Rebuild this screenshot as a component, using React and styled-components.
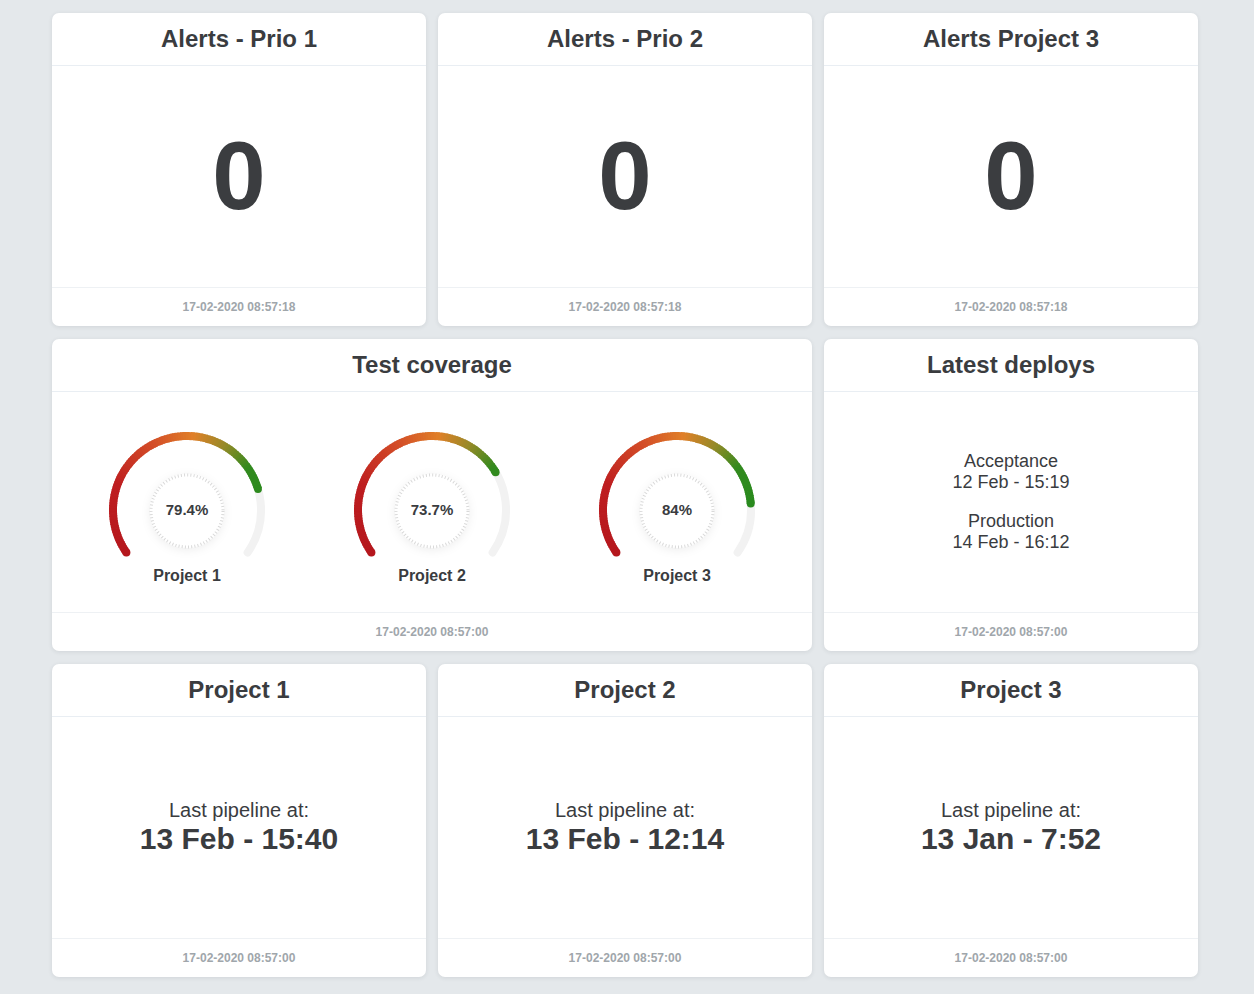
import styled, { createGlobalStyle } from 'styled-components';

const GlobalStyle = createGlobalStyle`
	body {
		margin: 0;
		background: #e4e8eb;
		font-family: 'Liberation Sans', Arial, Helvetica, sans-serif;
		color: #3a3c3f;
	}
`;

const Board = styled.div`
	display: grid;
	grid-template-columns: repeat(3, 374px);
	grid-auto-rows: 312.5px;
	gap: 13px 12px;
	padding: 13px 0 18px 52px;
`;

const Card = styled.section`
	grid-column: span ${({ span }) => span || 1};
	display: flex;
	flex-direction: column;
	background: #fff;
	border-radius: 7px;
	box-shadow: 0 1px 4px rgba(40, 50, 60, 0.1);
	overflow: hidden;
`;

const CardHeader = styled.header`
	height: 52px;
	flex: none;
	display: flex;
	align-items: center;
	justify-content: center;
	border-bottom: 1px solid #e9eef3;
`;

const CardTitle = styled.h2`
	margin: 0;
	font-size: 24px;
	font-weight: 700;
	color: #3a3c3f;
`;

const CardBody = styled.div`
	flex: 1;
	display: flex;
	flex-direction: column;
	align-items: center;
	justify-content: center;
	text-align: center;
`;

const CardFooter = styled.footer`
	height: 38px;
	flex: none;
	display: flex;
	align-items: center;
	justify-content: center;
	border-top: 1px solid #eef1f4;
	font-size: 12px;
	font-weight: 700;
	color: #a0a6ab;
`;

const BigCount = styled.div`
	font-size: 96px;
	font-weight: 700;
	line-height: 1;
	color: #3b3d40;
`;

const GaugeRow = styled.div`
	display: flex;
	justify-content: center;
	gap: 81px;
	padding-top: 10px;
`;

const GaugeWrap = styled.div`
	display: flex;
	flex-direction: column;
	align-items: center;
	width: 164px;
`;

const Dial = styled.div`
	position: relative;
	width: 164px;
	height: 130px;
`;

const Percent = styled.span`
	position: absolute;
	left: 0;
	right: 0;
	top: 73px;
	text-align: center;
	font-size: 15px;
	font-weight: 700;
	line-height: 18px;
	color: #3a3c3f;
`;

const GaugeLabel = styled.div`
	margin-top: 9px;
	font-size: 16px;
	font-weight: 700;
	line-height: 18px;
	color: #3a3c3f;
`;

const DeployGroup = styled.div`
	font-size: 18px;
	line-height: 21px;
	color: #3a3c3f;
	& + & {
		margin-top: 18px;
	}
`;

const PipelineLabel = styled.div`
	font-size: 20px;
	line-height: 23px;
	color: #3a3c3f;
`;

const PipelineTime = styled.div`
	font-size: 30px;
	font-weight: 700;
	line-height: 34px;
	color: #3a3c3f;
`;

const SPAN = 250;
const START = -125;
const STOPS = [
	[0, [181, 23, 29]],
	[0.22, [190, 30, 32]],
	[0.4, [212, 80, 40]],
	[0.52, [224, 128, 40]],
	[0.62, [150, 138, 40]],
	[0.72, [50, 138, 30]],
	[1, [30, 138, 30]],
];

const colorAt = t => {
	for (let i = 1; i < STOPS.length; i++) {
		const [t1, c1] = STOPS[i];
		const [t0, c0] = STOPS[i - 1];
		if (t <= t1) {
			const k = (t - t0) / (t1 - t0);
			const c = c0.map((v, j) => Math.round(v + (c1[j] - v) * k));
			return `rgb(${c.join(',')})`;
		}
	}
	return 'rgb(30,138,30)';
};

const CX = 82;
const CY = 82;
const R = 74;

const pt = deg => {
	const a = (deg * Math.PI) / 180;
	return [CX + R * Math.sin(a), CY - R * Math.cos(a)];
};

const arc = (a0, a1) => {
	const [x0, y0] = pt(a0);
	const [x1, y1] = pt(a1);
	const large = a1 - a0 > 180 ? 1 : 0;
	return `M ${x0} ${y0} A ${R} ${R} 0 ${large} 1 ${x1} ${y1}`;
};

const Gauge = ({ value, label }) => {
	const end = START + (SPAN * value) / 100;
	const segments = [];
	for (let a = START; a < end; a += 2) {
		const b = Math.min(a + 2.6, end);
		segments.push(
			<path
				key={a}
				d={arc(a, b)}
				stroke={colorAt((a - START + 1) / SPAN)}
				strokeWidth="8"
				fill="none"
			/>
		);
	}
	const [sx, sy] = pt(START);
	const [ex, ey] = pt(end);

	return (
		<GaugeWrap>
			<Dial>
				<svg width="164" height="130" viewBox="0 0 164 130">
					<defs>
						<filter id="soft" x="-50%" y="-50%" width="200%" height="200%">
							<feDropShadow dx="0" dy="2" stdDeviation="5" floodColor="#000" floodOpacity="0.07" />
						</filter>
					</defs>
					<path
						d={arc(START, START + SPAN)}
						stroke="#f2f2f2"
						strokeWidth="8"
						strokeLinecap="round"
						fill="none"
					/>
					{segments}
					<circle cx={sx} cy={sy} r="4" fill={colorAt(0)} />
					<circle cx={ex} cy={ey} r="4" fill={colorAt(value / 100)} />
					<circle cx={CX} cy={CY + 1} r="37" fill="#fff" filter="url(#soft)" />
					<circle
						cx={CX}
						cy={CY + 1}
						r="36"
						fill="none"
						stroke="#d9d9d9"
						strokeWidth="3"
						strokeDasharray="1 2.2"
					/>
				</svg>
				<Percent>{value}%</Percent>
			</Dial>
			<GaugeLabel>{label}</GaugeLabel>
		</GaugeWrap>
	);
};

const Tile = ({ title, footer, span, children }) => (
	<Card span={span}>
		<CardHeader>
			<CardTitle>{title}</CardTitle>
		</CardHeader>
		<CardBody>{children}</CardBody>
		<CardFooter>{footer}</CardFooter>
	</Card>
);

const alerts = ['Alerts - Prio 1', 'Alerts - Prio 2', 'Alerts Project 3'];

const coverage = [
	{ label: 'Project 1', value: 79.4 },
	{ label: 'Project 2', value: 73.7 },
	{ label: 'Project 3', value: 84 },
];

const pipelines = [
	{ title: 'Project 1', time: '13 Feb - 15:40' },
	{ title: 'Project 2', time: '13 Feb - 12:14' },
	{ title: 'Project 3', time: '13 Jan - 7:52' },
];

const App = () => (
	<>
		<GlobalStyle />
		<Board>
			{alerts.map(title => (
				<Tile key={title} title={title} footer="17-02-2020 08:57:18">
					<BigCount>0</BigCount>
				</Tile>
			))}
			<Tile title="Test coverage" footer="17-02-2020 08:57:00" span={2}>
				<GaugeRow>
					{coverage.map(g => (
						<Gauge key={g.label} value={g.value} label={g.label} />
					))}
				</GaugeRow>
			</Tile>
			<Tile title="Latest deploys" footer="17-02-2020 08:57:00">
				<DeployGroup>
					Acceptance
					<br />
					12 Feb - 15:19
				</DeployGroup>
				<DeployGroup>
					Production
					<br />
					14 Feb - 16:12
				</DeployGroup>
			</Tile>
			{pipelines.map(p => (
				<Tile key={p.title} title={p.title} footer="17-02-2020 08:57:00">
					<PipelineLabel>Last pipeline at:</PipelineLabel>
					<PipelineTime>{p.time}</PipelineTime>
				</Tile>
			))}
		</Board>
	</>
);

export default App;
